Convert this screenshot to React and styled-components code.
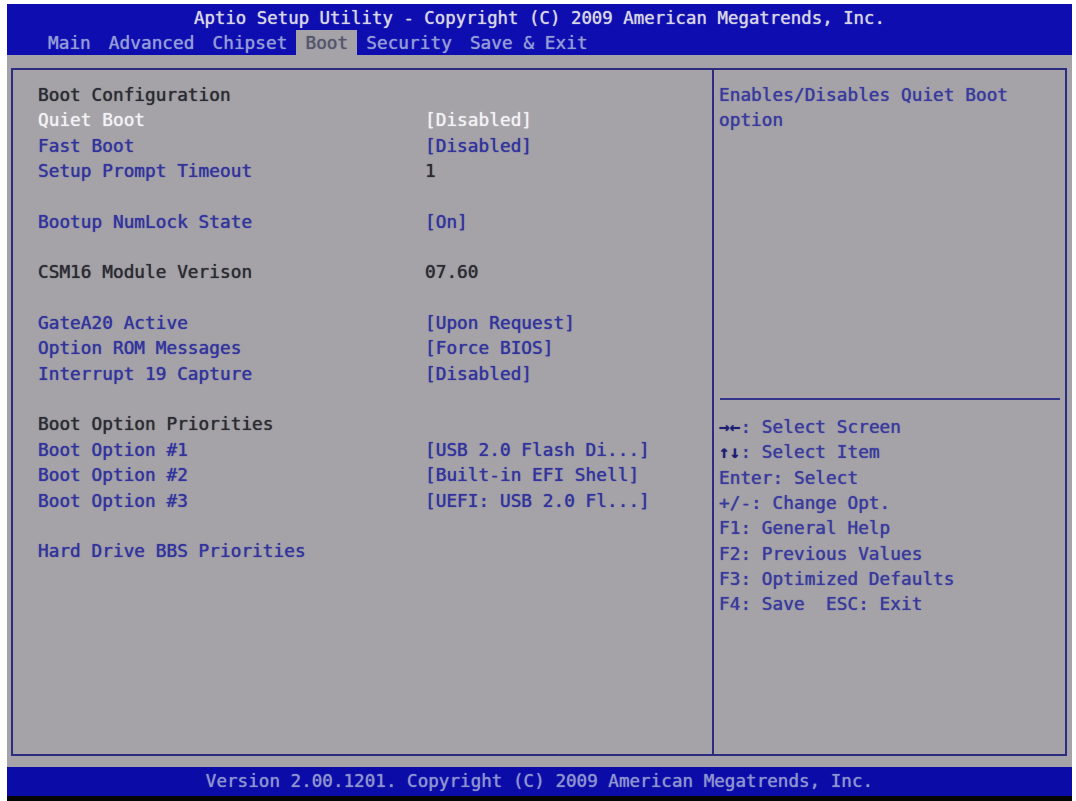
import React from "react";
import styled, { createGlobalStyle } from "styled-components";

const Global = createGlobalStyle`
  html, body { margin: 0; padding: 0; background: #ffffff; }
  body { font-family: "DejaVu Sans Mono", "Liberation Mono", monospace; }
`;

const Screen = styled.div`
  width: 1065px;
  height: 797px;
  margin: 4px 0 0 7px;
  display: flex;
  flex-direction: column;
  background: #a5a3a8;
  font-family: "DejaVu Sans Mono", "Liberation Mono", monospace;
`;

const Header = styled.header`
  height: 51px;
  background: #0d0db0;
  display: flex;
  flex-direction: column;
`;

const Title = styled.div`
  height: 26px;
  line-height: 28px;
  text-align: center;
  font-size: 17.4px;
  color: #d6d6e6;
  white-space: pre;
  text-shadow: 0 0 1px #d6d6e6;
`;

const Tabs = styled.nav`
  height: 25px;
  display: flex;
  padding-left: 32px;
`;

const Tab = styled.div`
  padding: 0 9px;
  line-height: 25px;
  font-size: 17.8px;
  white-space: pre;
  color: ${(p) => (p.$active ? "#55556c" : "#929cd6")};
  background: ${(p) => (p.$active ? "#a5a3a8" : "transparent")};
  text-shadow: 0 0 1px ${(p) => (p.$active ? "#55556c" : "#929cd6")};
`;

const Body = styled.main`
  flex: 1;
  padding: 13px 5px 11px 4px;
  display: flex;
`;

const Panel = styled.section`
  flex: 1;
  border: 2px solid #2c2c82;
  display: flex;
`;

const Left = styled.div`
  width: 701px;
  border-right: 2px solid #2c2c82;
  padding: 12px 0 0 25px;
  box-sizing: border-box;
  flex: none;
`;

const Grid = styled.div`
  display: grid;
  grid-template-columns: 387px 1fr;
  font-size: 17.8px;
  line-height: 25.35px;
  white-space: pre;
`;

const colorOf = (k) =>
  k === "sel" ? "#f2f2f4" : k === "dark" ? "#2c2b33" : "#33339c";

const Cell = styled.div`
  height: 25.35px;
  color: ${(p) => colorOf(p.$kind)};
  text-shadow: 0 0 1px ${(p) => colorOf(p.$kind)};
`;

const Right = styled.div`
  flex: 1;
  display: flex;
  flex-direction: column;
`;

const HelpTop = styled.div`
  height: 328px;
  box-sizing: border-box;
  padding: 12px 0 0 5px;
  font-size: 17.8px;
  line-height: 25.35px;
  color: #3a3a9c;
  text-shadow: 0 0 1px #3a3a9c;
  white-space: pre;
`;

const Rule = styled.div`
  height: 2px;
  margin: 0 5px 0 6px;
  background: #34348a;
`;

const Keys = styled.div`
  padding: 14px 0 0 5px;
  font-size: 17.8px;
  line-height: 25.35px;
  color: #3a3a9c;
  text-shadow: 0 0 1px #3a3a9c;
  white-space: pre;
`;

const KeyLine = styled.div`
  height: 25.35px;
`;

const Arrow = styled.span`
  color: #1e1e6e;
  font-weight: bold;
`;

const Footer = styled.footer`
  height: 29px;
  background: #0b0ba8;
  line-height: 29px;
  text-align: center;
  font-size: 17.6px;
  color: #8c94d0;
  text-shadow: 0 0 1px #8c94d0;
  white-space: pre;
`;

const BottomBar = styled.div`
  height: 5px;
  background: #050505;
`;

const rows = [
  ["Boot Configuration", "", "dark", ""],
  ["Quiet Boot", "[Disabled]", "sel", "sel"],
  ["Fast Boot", "[Disabled]", "", ""],
  ["Setup Prompt Timeout", "1", "", "dark"],
  ["", "", "", ""],
  ["Bootup NumLock State", "[On]", "", ""],
  ["", "", "", ""],
  ["CSM16 Module Verison", "07.60", "dark", "dark"],
  ["", "", "", ""],
  ["GateA20 Active", "[Upon Request]", "", ""],
  ["Option ROM Messages", "[Force BIOS]", "", ""],
  ["Interrupt 19 Capture", "[Disabled]", "", ""],
  ["", "", "", ""],
  ["Boot Option Priorities", "", "dark", ""],
  ["Boot Option #1", "[USB 2.0 Flash Di...]", "", ""],
  ["Boot Option #2", "[Built-in EFI Shell]", "", ""],
  ["Boot Option #3", "[UEFI: USB 2.0 Fl...]", "", ""],
  ["", "", "", ""],
  ["Hard Drive BBS Priorities", "", "", ""],
];

const tabs = ["Main", "Advanced", "Chipset", "Boot", "Security", "Save & Exit"];

export default function App() {
  return (
    <>
      <Global />
      <Screen>
        <Header>
          <Title>Aptio Setup Utility - Copyright (C) 2009 American Megatrends, Inc.</Title>
          <Tabs>
            {tabs.map((t) => (
              <Tab key={t} $active={t === "Boot"}>
                {t}
              </Tab>
            ))}
          </Tabs>
        </Header>
        <Body>
          <Panel>
            <Left>
              <Grid>
                {rows.map(([label, value, lk, vk], i) => (
                  <React.Fragment key={i}>
                    <Cell $kind={lk}>{label}</Cell>
                    <Cell $kind={vk}>{value}</Cell>
                  </React.Fragment>
                ))}
              </Grid>
            </Left>
            <Right>
              <HelpTop>{"Enables/Disables Quiet Boot\noption"}</HelpTop>
              <Rule />
              <Keys>
                <KeyLine>
                  <Arrow>→←</Arrow>: Select Screen
                </KeyLine>
                <KeyLine>
                  <Arrow>↑↓</Arrow>: Select Item
                </KeyLine>
                <KeyLine>Enter: Select</KeyLine>
                <KeyLine>+/-: Change Opt.</KeyLine>
                <KeyLine>F1: General Help</KeyLine>
                <KeyLine>F2: Previous Values</KeyLine>
                <KeyLine>F3: Optimized Defaults</KeyLine>
                <KeyLine>F4: Save  ESC: Exit</KeyLine>
              </Keys>
            </Right>
          </Panel>
        </Body>
        <Footer>Version 2.00.1201. Copyright (C) 2009 American Megatrends, Inc.</Footer>
        <BottomBar />
      </Screen>
    </>
  );
}
